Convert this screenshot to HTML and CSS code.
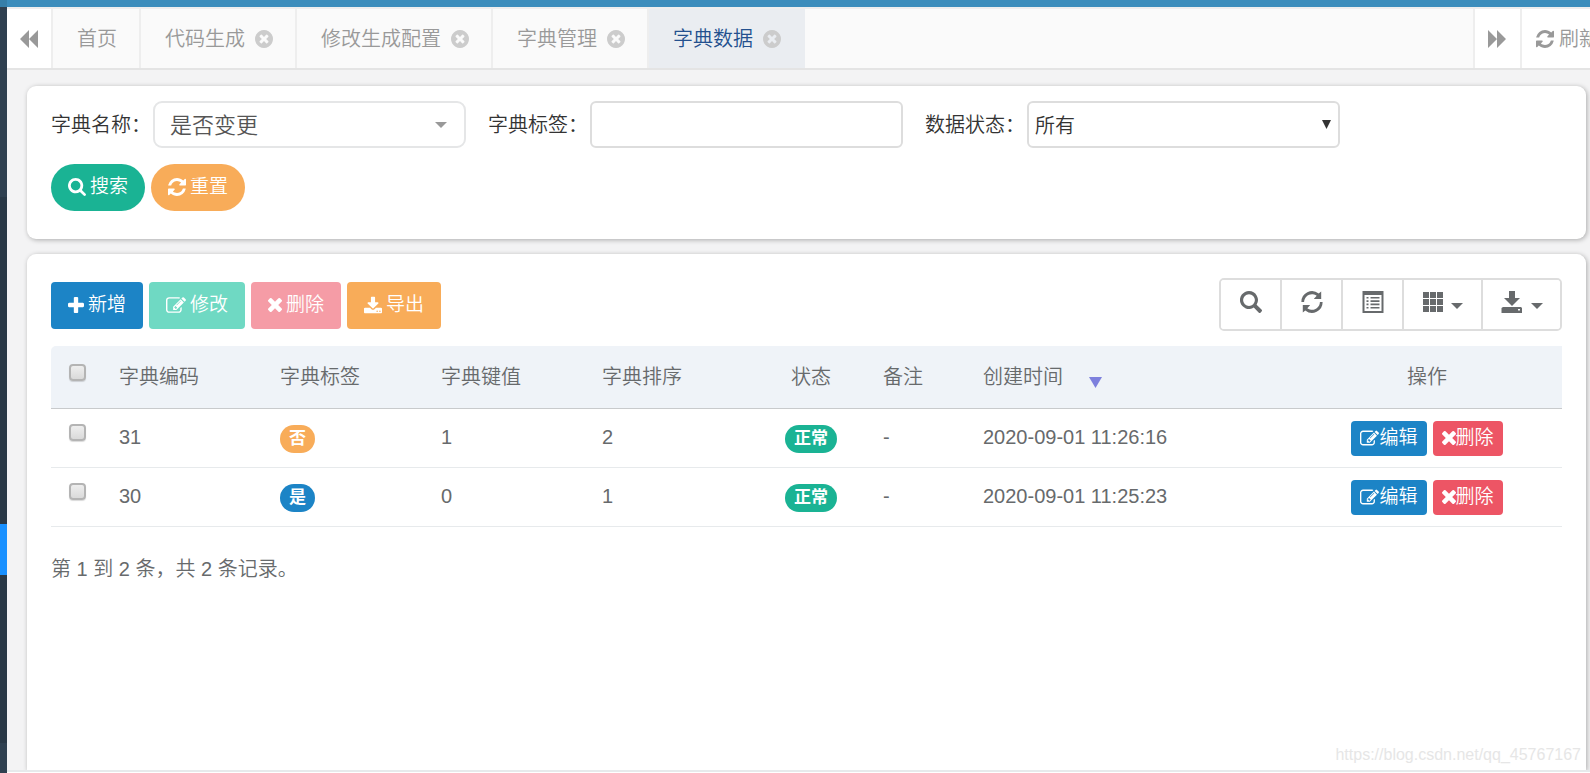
FILE: index.html
```html
<!DOCTYPE html>
<html lang="zh-CN">
<head>
<meta charset="utf-8">
<title>字典数据</title>
<link rel="stylesheet" href="styles.css">
</head>
<body>
<svg class="sprite" aria-hidden="true">
  <symbol id="i-search" viewBox="64 128 1664 1664"><path d="M1216 832q0-185-131.500-316.500t-316.500-131.500-316.500 131.500-131.500 316.500 131.500 316.500 316.500 131.500 316.500-131.500 131.500-316.500zm512 832q0 52-38 90t-90 38q-54 0-90-38l-343-342q-179 124-399 124-143 0-273.500-55.500t-225-150-150-225-55.500-273.500 55.500-273.500 150-225 225-150 273.500-55.500 273.500 55.500 225 150 150 225 55.500 273.500q0 220-124 399l343 343q37 37 37 90z"/></symbol>
  <symbol id="i-refresh" viewBox="128 128 1536 1536"><path d="M1639 1056q0 5-1 7-64 268-268 434.500t-478 166.500q-146 0-282.500-55t-243.500-157l-129 129q-19 19-45 19t-45-19-19-45v-448q0-26 19-45t45-19h448q26 0 45 19t19 45-19 45l-137 137q71 66 161 102t187 36q134 0 250-65t186-179q11-17 53-117 8-23 30-23h192q13 0 22.500 9.500t9.500 22.500zm25-800v448q0 26-19 45t-45 19h-448q-26 0-45-19t-19-45 19-45l138-138q-148-137-349-137-134 0-250 65t-186 179q-11 17-53 117-8 23-30 23h-199q-13 0-22.500-9.500t-9.500-22.500v-7q65-268 270-434.500t480-166.500q146 0 284 55.500t245 156.500l130-129q19-19 45-19t45 19 19 45z"/></symbol>
  <symbol id="i-plus" viewBox="192 128 1408 1408"><path d="M1600 736v192q0 40-28 68t-68 28h-416v416q0 40-28 68t-68 28h-192q-40 0-68-28t-28-68v-416h-416q-40 0-68-28t-28-68v-192q0-40 28-68t68-28h416v-416q0-40 28-68t68-28h192q40 0 68 28t28 68v416h416q40 0 68 28t28 68z"/></symbol>
  <symbol id="i-times" viewBox="302 366 1188 1188"><path d="M1490 1322q0 40-28 68l-136 136q-28 28-68 28t-68-28l-294-294-294 294q-28 28-68 28t-68-28l-136-136q-28-28-28-68t28-68l294-294-294-294q-28-28-28-68t28-68l136-136q28-28 68-28t68 28l294 294 294-294q28-28 68-28t68 28l136 136q28 28 28 68t-28 68l-294 294 294 294q28 28 28 68z"/></symbol>
  <symbol id="i-close" viewBox="128 128 1536 1536"><path d="M1277 1122q0-26-19-45l-181-181 181-181q19-19 19-45 0-27-19-46l-90-90q-19-19-46-19-26 0-45 19l-181 181-181-181q-19-19-45-19-27 0-46 19l-90 90q-19 19-19 46 0 26 19 45l181 181-181 181q-19 19-19 45 0 27 19 46l90 90q19 19 46 19 26 0 45-19l181-181 181 181q19 19 45 19 27 0 46-19l90-90q19-19 19-46zm387-226q0 209-103 385.500t-279.500 279.500-385.500 103-385.500-103-279.500-279.500-103-385.500 103-385.500 279.500-279.500 385.500-103 385.500 103 279.500 279.500 103 385.500z"/></symbol>
  <symbol id="i-edit" viewBox="0 128 1792 1408"><path d="M888 1184l116-116-152-152-116 116v56h96v96h56zm440-720q-16-16-33 1l-350 350q-17 17-1 33t33-1l350-350q17-17 1-33zm80 594v190q0 119-84.500 203.500t-203.500 84.500h-832q-119 0-203.500-84.500t-84.500-203.500v-832q0-119 84.500-203.500t203.500-84.500h832q63 0 117 25 15 7 18 23 3 17-9 29l-49 49q-14 14-32 8-23-6-45-6h-832q-66 0-113 47t-47 113v832q0 66 47 113t113 47h832q66 0 113-47t47-113v-126q0-13 9-22l64-64q15-15 35-7t20 29zm-96-738l288 288-672 672h-288v-288zm444 132l-92 92-288-288 92-92q28-28 68-28t68 28l152 152q28 28 28 68t-28 68z"/></symbol>
  <symbol id="i-download" viewBox="64 0 1664 1536"><path d="M1344 1344q0-26-19-45t-45-19-45 19-19 45 19 45 45 19 45-19 19-45zm256 0q0-26-19-45t-45-19-45 19-19 45 19 45 45 19 45-19 19-45zm128-224v320q0 40-28 68t-68 28h-1472q-40 0-68-28t-28-68v-320q0-40 28-68t68-28h465l135 136q58 56 136 56t136-56l136-136h464q40 0 68 28t28 68zm-325-569q17 41-14 70l-448 448q-18 19-45 19t-45-19l-448-448q-31-29-14-70 17-39 59-39h256v-448q0-26 19-45t45-19h256q26 0 45 19t19 45v448h256q42 0 59 39z"/></symbol>
  <symbol id="i-back" viewBox="0 0 18 18"><path d="M9 0v18L0 9zM18 0v18L9 9z"/></symbol>
  <symbol id="i-forward" viewBox="0 0 18 18"><path d="M0 0v18l9-9zM9 0v18l9-9z"/></symbol>
  <symbol id="g-search" viewBox="0 0 22 22"><path fill-rule="evenodd" d="M9 0a9 9 0 1 0 4.800 16.600l4.800 4.800a1.500 1.500 0 0 0 2.100 0l.8-.8a1.500 1.500 0 0 0 0-2.100l-4.900-4.800A9 9 0 0 0 9 0zm0 3.200a5.900 5.900 0 1 1 0 11.800A5.900 5.900 0 0 1 9 3.200z"/></symbol>
  <symbol id="g-refresh" viewBox="0 0 22 22"><path d="M.4 11A10.600 10.600 0 0 1 17.700 2.600L20.200.4V8h-7.400L15.700 4.700A7.900 7.900 0 0 0 3.200 9.800L3.100 11zM21.600 11A10.600 10.600 0 0 1 4.300 19.400L1.800 21.600V14H9.200L6.300 17.300A7.900 7.900 0 0 0 18.800 12.200L18.900 11z"/></symbol>
  <symbol id="g-list" viewBox="0 0 22 22"><path fill-rule="evenodd" d="M.5 0h21v22H.5zM2.500 4v16h17V4zM4.500 6h2v1.600h-2zm4 0h9v1.600h-9zm-4 3.300h2v1.600h-2zm4 0h9v1.600h-9zm-4 3.300h2v1.600h-2zm4 0h9v1.600h-9zm-4 3.400h2v1.600h-2zm4 0h9v1.600h-9z"/></symbol>
  <symbol id="g-grid" viewBox="0 0 20 20"><path d="M0 0h6v6H0zM7 0h6v6H7zM14 0h6v6h-6zM0 7h6v6H0zM7 7h6v6H7zM14 7h6v6h-6zM0 14h6v6H0zM7 14h6v6H7zM14 14h6v6h-6z"/></symbol>
  <symbol id="g-save" viewBox="0 0 22 22"><path fill-rule="evenodd" d="M8 0h6v7h5l-8 8-8-8h5zM2 16h18l1 1v5H.5v-5zM17 18v1.500h2V18z"/></symbol>
  <symbol id="i-caret" viewBox="0 0 12 6"><path d="M0 0h12L6 6z"/></symbol>
</svg>

<div class="topbar"></div>
<div class="app">
  <aside class="sidebar">
    <div class="side-top"></div>
    <div class="side-group"></div>
    <div class="side-active"></div>
    <div class="side-group side-lower"></div>
    <div class="side-rest"></div>
  </aside>
  <div class="main">
    <nav class="tabs">
      <button class="tab-btn roll" type="button" aria-label="向左"><svg class="ic18"><use href="#i-back"/></svg></button>
      <div class="tab-list">
        <a class="tab" href="#">首页</a>
        <a class="tab" href="#">代码生成<svg class="ic18"><use href="#i-close"/></svg></a>
        <a class="tab" href="#">修改生成配置<svg class="ic18"><use href="#i-close"/></svg></a>
        <a class="tab" href="#">字典管理<svg class="ic18"><use href="#i-close"/></svg></a>
        <a class="tab active" href="#">字典数据<svg class="ic18"><use href="#i-close"/></svg></a>
      </div>
      <button class="tab-btn roll right" type="button" aria-label="向右"><svg class="ic18"><use href="#i-forward"/></svg></button>
      <button class="tab-btn reload" type="button"><svg class="ic18"><use href="#i-refresh"/></svg>刷新</button>
    </nav>

    <main class="content">
      <form class="card search">
        <div class="fields">
          <div class="field">
            <label for="f-name">字典名称：</label>
            <div class="pick pick-name">
              <select id="f-name"><option>是否变更</option></select>
              <svg><use href="#i-caret"/></svg>
            </div>
          </div>
          <div class="field">
            <label for="f-label">字典标签：</label>
            <input id="f-label" class="text" type="text">
          </div>
          <div class="field">
            <label for="f-state">数据状态：</label>
            <div class="pick pick-state">
              <select id="f-state"><option>所有</option></select>
              <svg viewBox="0 0 9 9"><path d="M0 0h9L4.500 9z"/></svg>
            </div>
          </div>
        </div>
        <div class="row">
          <button class="btn pill green" type="button"><svg class="ic18"><use href="#i-search"/></svg>搜索</button>
          <button class="btn pill orange" type="button"><svg class="ic18"><use href="#i-refresh"/></svg>重置</button>
        </div>
      </form>

      <section class="card list">
        <div class="bar">
          <div class="row">
            <button class="btn blue" type="button"><svg class="ic16"><use href="#i-plus"/></svg>新增</button>
            <button class="btn green off" type="button"><svg class="ic-edit"><use href="#i-edit"/></svg>修改</button>
            <button class="btn red off" type="button"><svg class="ic14"><use href="#i-times"/></svg>删除</button>
            <button class="btn orange" type="button"><svg class="ic18"><use href="#i-download"/></svg>导出</button>
          </div>
          <div class="tools">
            <button type="button" aria-label="搜索"><svg class="ic22"><use href="#g-search"/></svg></button>
            <button type="button" aria-label="刷新"><svg class="ic22"><use href="#g-refresh"/></svg></button>
            <button type="button" aria-label="切换视图"><svg class="ic22"><use href="#g-list"/></svg></button>
            <button class="wide" type="button" aria-label="列"><svg class="ic20"><use href="#g-grid"/></svg><svg class="caret"><use href="#i-caret"/></svg></button>
            <button class="wide" type="button" aria-label="导出数据"><svg class="ic22"><use href="#g-save"/></svg><svg class="caret"><use href="#i-caret"/></svg></button>
          </div>
        </div>

        <table>
          <colgroup>
            <col class="c-check"><col class="c-std"><col class="c-std"><col class="c-std"><col class="c-sort"><col class="c-state"><col class="c-note"><col class="c-time"><col class="c-act">
          </colgroup>
          <thead>
            <tr>
              <th class="check"><input type="checkbox" aria-label="全选"></th>
              <th>字典编码</th><th>字典标签</th><th>字典键值</th><th>字典排序</th>
              <th class="mid">状态</th><th>备注</th>
              <th>创建时间<svg class="desc" viewBox="0 0 13 11"><path d="M0 0h13L6.500 11z"/></svg></th>
              <th class="mid">操作</th>
            </tr>
          </thead>
          <tbody>
            <tr>
              <td class="check"><input type="checkbox" aria-label="选择 31"></td>
              <td>31</td><td class="tag"><span class="badge orange">否</span></td><td>1</td><td>2</td>
              <td class="mid"><span class="badge green">正常</span></td><td>-</td><td>2020-09-01 11:26:16</td>
              <td class="mid"><div class="acts"><a class="btn small blue" href="#"><svg class="ic-edit"><use href="#i-edit"/></svg>编辑</a><a class="btn small red" href="#"><svg class="ic14"><use href="#i-times"/></svg>删除</a></div></td>
            </tr>
            <tr>
              <td class="check"><input type="checkbox" aria-label="选择 30"></td>
              <td>30</td><td class="tag"><span class="badge blue">是</span></td><td>0</td><td>1</td>
              <td class="mid"><span class="badge green">正常</span></td><td>-</td><td>2020-09-01 11:25:23</td>
              <td class="mid"><div class="acts"><a class="btn small blue" href="#"><svg class="ic-edit"><use href="#i-edit"/></svg>编辑</a><a class="btn small red" href="#"><svg class="ic14"><use href="#i-times"/></svg>删除</a></div></td>
            </tr>
          </tbody>
        </table>
        <p class="total">第 1 到 2 条，共 2 条记录。</p>
      </section>
    </main>
    <div class="foot"></div>
  </div>
</div>
<div class="mark">https://blog.csdn.net/qq_45767167</div>
</body>
</html>
```

FILE: styles.css
```css
* { box-sizing: border-box; }

body {
  margin: 0;
  height: 100vh;
  display: flex;
  flex-direction: column;
  overflow: hidden;
  position: relative;
  font: 350 20px/28px "Liberation Sans", "Noto Sans CJK SC", sans-serif;
  color: #676a6c;
  background: #fff;
}

button, input, select { font: inherit; color: inherit; margin: 0; }
a { color: inherit; text-decoration: none; }
svg { fill: currentColor; flex: none; display: block; }
.sprite { display: none; }

.ic14 { width: 14px; height: 14px; }
.ic16 { width: 16px; height: 16px; }
.ic18 { width: 18px; height: 18px; }
.ic20 { width: 20px; height: 20px; }
.ic22 { width: 22px; height: 22px; }
.ic-edit { width: 20px; height: 16px; }

.topbar { height: 7px; flex: none; background: #3c8dbc; border-left: 7px solid #367fa9; }
.app { flex: 1; display: flex; min-height: 0; }

.sidebar { width: 7px; flex: none; display: flex; flex-direction: column; background: #2f4050; }
.side-top { height: 190px; }
.side-group { height: 327px; background: #293846; }
.side-active { height: 51px; background: #1890ff; }
.side-lower { height: 168px; }
.side-rest { flex: 1; }

.main { flex: 1; min-width: 0; display: flex; flex-direction: column; }

.tabs {
  flex: none;
  display: flex;
  height: 63px;
  background: #fafafa;
  border-top: 2px solid #eee;
  border-bottom: 2px solid #e4e4e4;
  color: #999;
}
.tab-list { flex: 1; display: flex; min-width: 0; overflow: hidden; }
.tab {
  display: flex;
  align-items: center;
  gap: 10px;
  padding: 0 22px 0 24px;
  border-right: 2px solid #eee;
  white-space: nowrap;
}
.tab svg { color: #ccc; }
.tab.active { background: #eaedf1; color: #23508e; border-color: #eaedf1; }
.tab-btn {
  flex: none;
  display: flex;
  align-items: center;
  background: #fff;
  border: 0;
  border-right: 2px solid #eee;
  padding: 0;
  overflow: hidden;
  white-space: nowrap;
}
.roll { width: 46px; justify-content: center; }
.roll.right { width: 49px; border-left: 2px solid #eee; padding-right: 2px; }
.reload { width: 68px; gap: 5px; padding-left: 14px; border-right: 0; }

.content {
  flex: 1;
  display: flex;
  flex-direction: column;
  gap: 15px;
  min-height: 0;
  padding: 16px 4px 0 20px;
  background: #f3f3f4;
}
.card {
  background: #fff;
  border-radius: 9px;
  box-shadow: 1px 1px 5px rgba(0, 0, 0, .3);
  padding: 15px 24px 28px;
}
.fields { display: flex; flex-wrap: wrap; gap: 22px; margin-bottom: 16px; color: #333; }
.field { display: flex; align-items: center; }
.field label { width: 102px; flex: none; white-space: nowrap; }
.text, .pick select {
  display: block;
  width: 313px;
  height: 47px;
  border: 2px solid #ddd;
  border-radius: 6px;
  background: #fff;
  padding: 0 6px;
  appearance: none;
}
.pick { position: relative; }
.pick svg { position: absolute; top: 19px; right: 9px; width: 9px; height: 9px; pointer-events: none; }
.pick select { padding-top: 2px; }
.pick-name select { font-size: 22px; color: #555; border-color: #e5e6e7; border-radius: 9px; padding: 3px 15px 0; }
.pick-name svg { top: 21px; right: 19px; width: 12px; height: 6px; color: #999; }

.row { display: flex; gap: 6px; }
.btn {
  display: flex;
  align-items: center;
  gap: 4px;
  height: 47px;
  padding: 0 17px 2px;
  border: 0;
  border-radius: 4px;
  color: #fff;
  font-size: 19px;
  white-space: nowrap;
}
.pill { border-radius: 24px; }
.green { background: #1ab394; }
.orange { background: #f8ac59; }
.blue { background: #1c84c6; }
.red { background: #ed5565; }
.green.off { background: #6fd9c3; }
.red.off { background: #f59ca6; }
.small { height: 35px; padding: 0 9px; gap: 0; }
.small .ic-edit { width: 19px; }

.list { flex: 1; border-radius: 9px 9px 0 0; padding-top: 24px; }
.bar { display: flex; justify-content: space-between; align-items: center; margin-bottom: 15px; }
.bar .row { padding-top: 2px; }
.tools { display: flex; border: 2px solid #ddd; border-radius: 5px; overflow: hidden; }
.tools button {
  display: flex;
  align-items: center;
  justify-content: center;
  gap: 8px;
  width: 61px;
  height: 49px;
  padding: 0 0 5px;
  border: 0;
  border-right: 2px solid #ddd;
  background: #fff;
}
.tools .wide { width: 79px; }
.tools button:last-child { border-right: 0; width: 77px; }
.caret { width: 12px; height: 6px; margin-top: 8px; }

table { width: 100%; table-layout: fixed; border-collapse: separate; border-spacing: 0; }
.c-check { width: 53px; }
.c-std { width: 161px; }
.c-sort { width: 167px; }
.c-state { width: 114px; }
.c-note { width: 100px; }
.c-time { width: 324px; }
.c-act { width: 270px; }
th, td { padding: 0 0 0 15px; text-align: left; font-weight: inherit; vertical-align: middle; white-space: nowrap; }
th { height: 63px; background: #eff3f8; border-bottom: 1px solid #c8cacc; }
th:first-child { border-top-left-radius: 5px; }
td { height: 59px; padding-bottom: 3px; border-bottom: 1px solid #e7eaec; }
td.tag { padding-bottom: 0; }
th.mid, td.mid { text-align: center; padding: 0; }
th.check, td.check { vertical-align: top; padding: 15px 0 0 18px; }
th.check { padding-top: 18px; }
.check input {
  display: block;
  width: 17px;
  height: 17px;
  appearance: none;
  border: 2px solid #b4b4b4;
  border-radius: 4px;
  background: linear-gradient(#eee, #dadada);
  box-shadow: 0 1px 1px rgba(0, 0, 0, .15);
}
.desc { display: inline-block; width: 13px; height: 11px; margin-left: 26px; vertical-align: -4px; color: #7d80dd; }
.badge {
  display: inline-block;
  vertical-align: middle;
  height: 28px;
  padding: 0 9px;
  border-radius: 14px;
  color: #fff;
  font-size: 17px;
  font-weight: 700;
}
.acts { display: flex; justify-content: center; gap: 6px; }
.total { margin: 28px 0 0; }

.foot { flex: none; height: 3px; background: #e7eaec; border-bottom: 1px solid #fff; }
.mark { position: absolute; right: 9px; bottom: 4px; font-size: 16px; color: #e6e6e6; }
```
